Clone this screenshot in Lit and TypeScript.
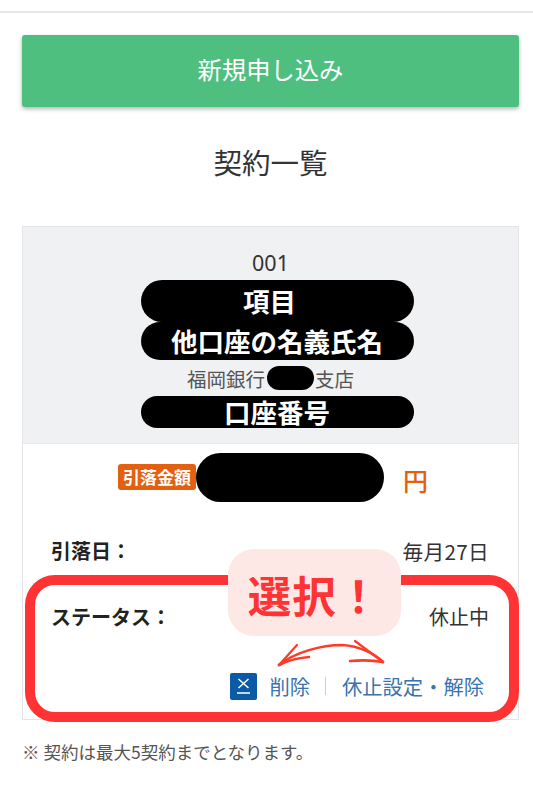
import { LitElement, html, css } from "lit";
import { customElement } from "lit/decorators.js";

@customElement("app-root")
export class AppRoot extends LitElement {
  static styles = css`
    :host {
      display: block;
      position: relative;
      width: 533px;
      height: 800px;
      overflow: hidden;
      background: #fff;
      color: #333;
      font-family: "Noto Sans CJK JP", "Noto Sans", sans-serif;
    }
    .topbar { height: 11px; border-bottom: 2px solid #e6e6e8; }
    .page { padding: 22px 14px 0 22px; display: flex; flex-direction: column; }
    .cta {
      height: 72px; padding-bottom: 4px; box-sizing: border-box;
      display: flex; align-items: center; justify-content: center;
      background: #4fbf80; color: #fff;
      font-size: 24.3px; line-height: 1;
      border-radius: 3px;
      box-shadow: 0 2px 4px rgba(0,0,0,.3);
    }
    h1 {
      margin: 35px 0 0; height: 40px;
      text-align: center; font-weight: 400; font-size: 28.5px; line-height: 40px; color: #333;
    }
    .card { margin-top: 44px; border: 1px solid #e4e4e6; height: 492px; display: flex; flex-direction: column; }
    .head {
      height: 217px; background: #f0f1f3; border-bottom: 1px solid #e6e6e8;
      display: flex; flex-direction: column; align-items: center;
      padding-top: 21px; box-sizing: border-box;
    }
    .num { font-size: 21.5px; line-height: 30px; height: 32px; color: #333; font-family: "Noto Sans", sans-serif; }
    .pill {
      width: 273px; margin-left: 13px; background: #000; color: #fff; font-weight: 700; font-size: 26.5px;
      display: flex; align-items: center; justify-content: center;
      border-radius: 22px; line-height: 1;
    }
    .p1 { height: 42px; box-sizing: border-box; padding-right: 15px; }
    .p2 { height: 38px; }
    .p3 { height: 32px; border-radius: 16px; margin-top: 1px; }
    .branch { display: flex; align-items: center; height: 34px; font-size: 19.5px; color: #555; margin-top: 1px; }
    .mask { width: 47px; height: 24px; background: #000; border-radius: 12px; margin: 0 1px 0 2px; }
    .amount { display: flex; align-items: center; height: 66px; padding-left: 95px; }
    .badge {
      width: 78px; height: 26px; box-sizing: border-box; background: #e2600f; color: #fff;
      font-size: 17px; font-weight: 700; line-height: 26px; text-align: center; border-radius: 3px;
      white-space: nowrap; margin-top: 0;
    }
    .mask-amount { width: 188px; height: 49px; background: #000; border-radius: 25px; }
    .yen { margin-left: 19px; font-size: 25px; color: #e2600f; font-weight: 500; line-height: 1; margin-top: 6px; }
    .row {
      display: flex; justify-content: space-between; align-items: center;
      padding: 0 29px 0 28px; font-size: 20px; line-height: 28px;
    }
    .row b { font-weight: 700; color: #222; }
    .date { font-size: 20.7px; letter-spacing: .3px; }
    .r1 { margin-top: 27px; }
    .r2 { margin-top: 38px; }
    .actions {
      display: flex; align-items: center; justify-content: flex-end;
      padding-right: 34px; margin-top: 41px; font-size: 20.3px; color: #3a72ae; line-height: 28px;
    }
    .actions svg { display: block; margin-right: 12px; }
    .sep { width: 1px; height: 18px; background: #c4d0dc; margin: 0 16px 0 15px; }
    .note { margin-top: 20px; font-size: 17.5px; line-height: 24px; color: #555; }
    .frame {
      position: absolute; left: 25px; top: 575px; width: 494px; height: 147px; box-sizing: border-box;
      border: 10px solid #ff3333; border-radius: 30px;
    }
    .bubble {
      position: absolute; left: 228px; top: 549px; width: 173px; height: 87px; padding-top: 4px; box-sizing: border-box;
      background: #fee8e6; border-radius: 26px; color: #ff3333;
      display: flex; align-items: center; justify-content: center;
      font-size: 43.5px; font-weight: 700; line-height: 1; letter-spacing: 1px;
    }
    .arrows { position: absolute; left: 270px; top: 635px; }
  `;

  render() {
    return html`
      <div class="topbar"></div>
      <div class="page">
        <div class="cta">新規申し込み</div>
        <h1>契約一覧</h1>
        <div class="card">
          <div class="head">
            <div class="num">001</div>
            <div class="pill p1">項目</div>
            <div class="pill p2">他口座の名義氏名</div>
            <div class="branch">福岡銀行<span class="mask"></span>支店</div>
            <div class="pill p3">口座番号</div>
          </div>
          <div class="amount">
            <span class="badge">引落金額</span>
            <span class="mask-amount"></span>
            <span class="yen">円</span>
          </div>
          <div class="row r1"><b>引落日：</b><span class="date">毎月27日</span></div>
          <div class="row r2"><b>ステータス：</b><span>休止中</span></div>
          <div class="actions">
            <svg width="27" height="27" viewBox="0 0 27 27">
              <rect width="27" height="27" rx="2" fill="#0b5aa5"/>
              <path d="M8.5 6l10 9M18.5 6l-10 9M7 20h13" stroke="#fff" stroke-width="1.5" fill="none"/>
            </svg>
            <span>削除</span><span class="sep"></span><span>休止設定・解除</span>
          </div>
        </div>
        <div class="note">※ 契約は最大5契約までとなります。</div>
      </div>
      <div class="frame"></div>
      <div class="bubble">選択！</div>
      <svg class="arrows" width="120" height="35" viewBox="270 635 120 35" fill="none" stroke="#ff3b26" stroke-linecap="round">
        <path d="M279 665C295 652 322 645 342 645C360 646 375 654 383 662" stroke-width="2.6"/>
        <path d="M279 665L297 645" stroke-width="2.2"/>
        <path d="M279 665C288 660 298 658 309 657" stroke-width="2.6"/>
        <path d="M383 662L355 641" stroke-width="2.2"/>
        <path d="M383 662C372 660 362 660 350 661" stroke-width="2.6"/>
      </svg>
    `;
  }
}
